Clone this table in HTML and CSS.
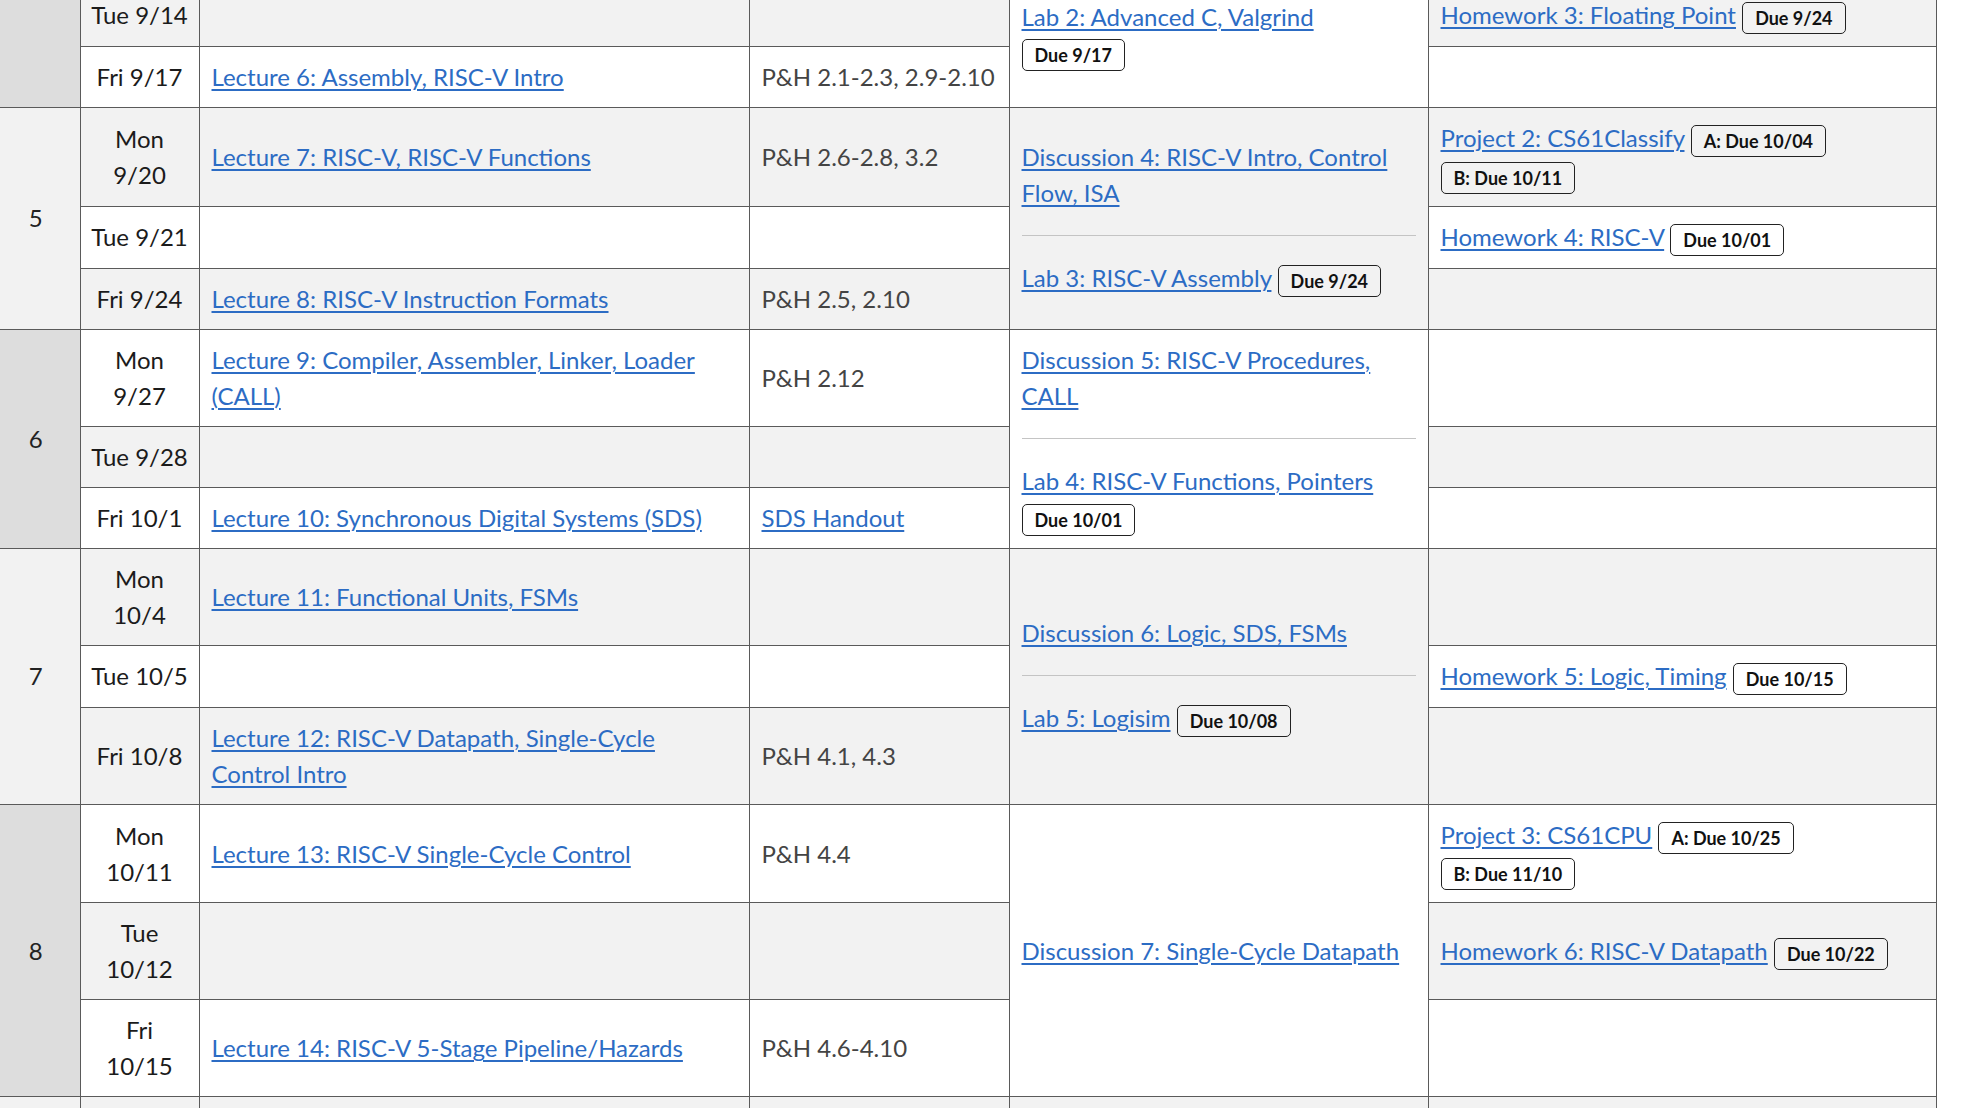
FILE: index.html
```html
<!DOCTYPE html>
<html lang="en">
<head>
<meta charset="utf-8">
<title>Schedule</title>
<link rel="stylesheet" href="styles.css">
</head>
<body>
<div class="viewport">
<table class="schedule">
  <colgroup>
    <col class="c-week"><col class="c-date"><col class="c-lec"><col class="c-read"><col class="c-lab"><col class="c-hw">
  </colgroup>
  <tbody>
    <tr class="row-tall">
      <td class="week" rowspan="3">4</td>
      <td class="date">Mon<br>9/13</td>
      <td class="lec"><a href="#">Lecture 5: Floating Point</a></td>
      <td class="read">P&amp;H 3.5, 3.9</td>
      <td class="lab" rowspan="3">
        <div class="item"><a href="#">Discussion 3: Floating Point,<br>RISC-V Intro</a></div>
        <hr class="sep">
        <div class="item"><a href="#">Lab 2: Advanced C, Valgrind</a> <span class="badge">Due 9/17</span></div>
      </td>
      <td class="hw"></td>
    </tr>
    <tr>
      <td class="date">Tue 9/14</td>
      <td class="lec"></td>
      <td class="read"></td>
      <td class="hw"><a href="#">Homework 3: Floating Point</a> <span class="badge">Due 9/24</span></td>
    </tr>
    <tr>
      <td class="date">Fri 9/17</td>
      <td class="lec"><a href="#">Lecture 6: Assembly, RISC-V Intro</a></td>
      <td class="read">P&amp;H 2.1-2.3, 2.9-2.10</td>
      <td class="hw"></td>
    </tr>

    <tr>
      <td class="week" rowspan="3">5</td>
      <td class="date">Mon<br>9/20</td>
      <td class="lec"><a href="#">Lecture 7: RISC-V, RISC-V Functions</a></td>
      <td class="read">P&amp;H 2.6-2.8, 3.2</td>
      <td class="lab" rowspan="3">
        <div class="item"><a href="#">Discussion 4: RISC-V Intro, Control<br>Flow, ISA</a></div>
        <hr class="sep">
        <div class="item"><a href="#">Lab 3: RISC-V Assembly</a> <span class="badge">Due 9/24</span></div>
      </td>
      <td class="hw"><a href="#">Project 2: CS61Classify</a> <span class="badge">A: Due 10/04</span> <span class="badge">B: Due 10/11</span></td>
    </tr>
    <tr>
      <td class="date">Tue 9/21</td>
      <td class="lec"></td>
      <td class="read"></td>
      <td class="hw"><a href="#">Homework 4: RISC-V</a> <span class="badge">Due 10/01</span></td>
    </tr>
    <tr>
      <td class="date">Fri 9/24</td>
      <td class="lec"><a href="#">Lecture 8: RISC-V Instruction Formats</a></td>
      <td class="read">P&amp;H 2.5, 2.10</td>
      <td class="hw"></td>
    </tr>

    <tr>
      <td class="week" rowspan="3">6</td>
      <td class="date">Mon<br>9/27</td>
      <td class="lec"><a href="#">Lecture 9: Compiler, Assembler, Linker, Loader<br>(CALL)</a></td>
      <td class="read">P&amp;H 2.12</td>
      <td class="lab" rowspan="3">
        <div class="item"><a href="#">Discussion 5: RISC-V Procedures,<br>CALL</a></div>
        <hr class="sep">
        <div class="item"><a href="#">Lab 4: RISC-V Functions, Pointers</a> <span class="badge">Due 10/01</span></div>
      </td>
      <td class="hw"></td>
    </tr>
    <tr>
      <td class="date">Tue 9/28</td>
      <td class="lec"></td>
      <td class="read"></td>
      <td class="hw"></td>
    </tr>
    <tr>
      <td class="date">Fri 10/1</td>
      <td class="lec"><a href="#">Lecture 10: Synchronous Digital Systems (SDS)</a></td>
      <td class="read"><a href="#">SDS Handout</a></td>
      <td class="hw"></td>
    </tr>

    <tr>
      <td class="week" rowspan="3">7</td>
      <td class="date">Mon<br>10/4</td>
      <td class="lec"><a href="#">Lecture 11: Functional Units, FSMs</a></td>
      <td class="read"></td>
      <td class="lab" rowspan="3">
        <div class="item"><a href="#">Discussion 6: Logic, SDS, FSMs</a></div>
        <hr class="sep">
        <div class="item"><a href="#">Lab 5: Logisim</a> <span class="badge">Due 10/08</span></div>
      </td>
      <td class="hw"></td>
    </tr>
    <tr>
      <td class="date">Tue 10/5</td>
      <td class="lec"></td>
      <td class="read"></td>
      <td class="hw"><a href="#">Homework 5: Logic, Timing</a> <span class="badge">Due 10/15</span></td>
    </tr>
    <tr>
      <td class="date">Fri 10/8</td>
      <td class="lec"><a href="#">Lecture 12: RISC-V Datapath, Single-Cycle<br>Control Intro</a></td>
      <td class="read">P&amp;H 4.1, 4.3</td>
      <td class="hw"></td>
    </tr>

    <tr>
      <td class="week" rowspan="3">8</td>
      <td class="date">Mon<br>10/11</td>
      <td class="lec"><a href="#">Lecture 13: RISC-V Single-Cycle Control</a></td>
      <td class="read">P&amp;H 4.4</td>
      <td class="lab" rowspan="3">
        <div class="item"><a href="#">Discussion 7: Single-Cycle Datapath</a></div>
      </td>
      <td class="hw"><a href="#">Project 3: CS61CPU</a> <span class="badge">A: Due 10/25</span> <span class="badge">B: Due 11/10</span></td>
    </tr>
    <tr>
      <td class="date">Tue<br>10/12</td>
      <td class="lec"></td>
      <td class="read"></td>
      <td class="hw"><a href="#">Homework 6: RISC-V Datapath</a> <span class="badge">Due 10/22</span></td>
    </tr>
    <tr>
      <td class="date">Fri<br>10/15</td>
      <td class="lec"><a href="#">Lecture 14: RISC-V 5-Stage Pipeline/Hazards</a></td>
      <td class="read">P&amp;H 4.6-4.10</td>
      <td class="hw"></td>
    </tr>

    <tr>
      <td class="week" rowspan="3">9</td>
      <td class="date">Mon<br>10/18</td>
      <td class="lec"><a href="#">Lecture 15: Pipelining, Hazards</a></td>
      <td class="read">P&amp;H 4.5</td>
      <td class="lab" rowspan="3">
        <div class="item"><a href="#">Discussion 8: Pipelining</a></div>
      </td>
      <td class="hw"></td>
    </tr>
  </tbody>
</table>
</div>
</body>
</html>
```

FILE: styles.css
```css
* {
  box-sizing: border-box;
}

html,
body {
  margin: 0;
  padding: 0;
  background: #ffffff;
}

body {
  font-family: Lato, "Segoe UI", "Liberation Sans", sans-serif;
  font-size: 24px;
  line-height: 36px;
  color: #1b1b1b;
}

.viewport {
  height: 100vh;
  overflow: hidden;
}

.schedule {
  border-collapse: collapse;
  table-layout: fixed;
  width: 1936px;
  margin-top: -159px;
}

.c-week { width: 80px; }
.c-date { width: 119px; }
.c-lec { width: 550px; }
.c-read { width: 260px; }
.c-lab { width: 419px; }
.c-hw { width: 508px; }

.schedule td {
  border: 1px solid #5a5a5a;
  padding: 12px;
  vertical-align: middle;
  background: #ffffff;
}

.schedule tbody tr:nth-child(even) > td {
  background: #f2f2f2;
}

.schedule td.week {
  border-left: 0;
  background: #dddddd;
  text-align: center;
  color: #222222;
  padding-left: 8px;
  padding-right: 16px;
}

.row-tall {
  height: 143px;
}

.schedule td.date {
  text-align: center;
  white-space: nowrap;
  padding-left: 4px;
  padding-right: 4px;
}

.read {
  color: #444444;
}

.schedule a {
  color: #2c6cc4;
  text-decoration: underline;
  text-decoration-thickness: 2px;
  text-underline-offset: 3px;
}

.sep {
  border: 0;
  border-top: 1px solid #c4c4c4;
  margin: 24px 0;
  height: 0;
}

.badge {
  display: inline-block;
  font-size: 18px;
  font-weight: 700;
  line-height: 20px;
  padding: 5px 12px;
  margin: 0;
  border: 1px solid #222222;
  border-radius: 5px;
  color: #111111;
  vertical-align: middle;
}
```
